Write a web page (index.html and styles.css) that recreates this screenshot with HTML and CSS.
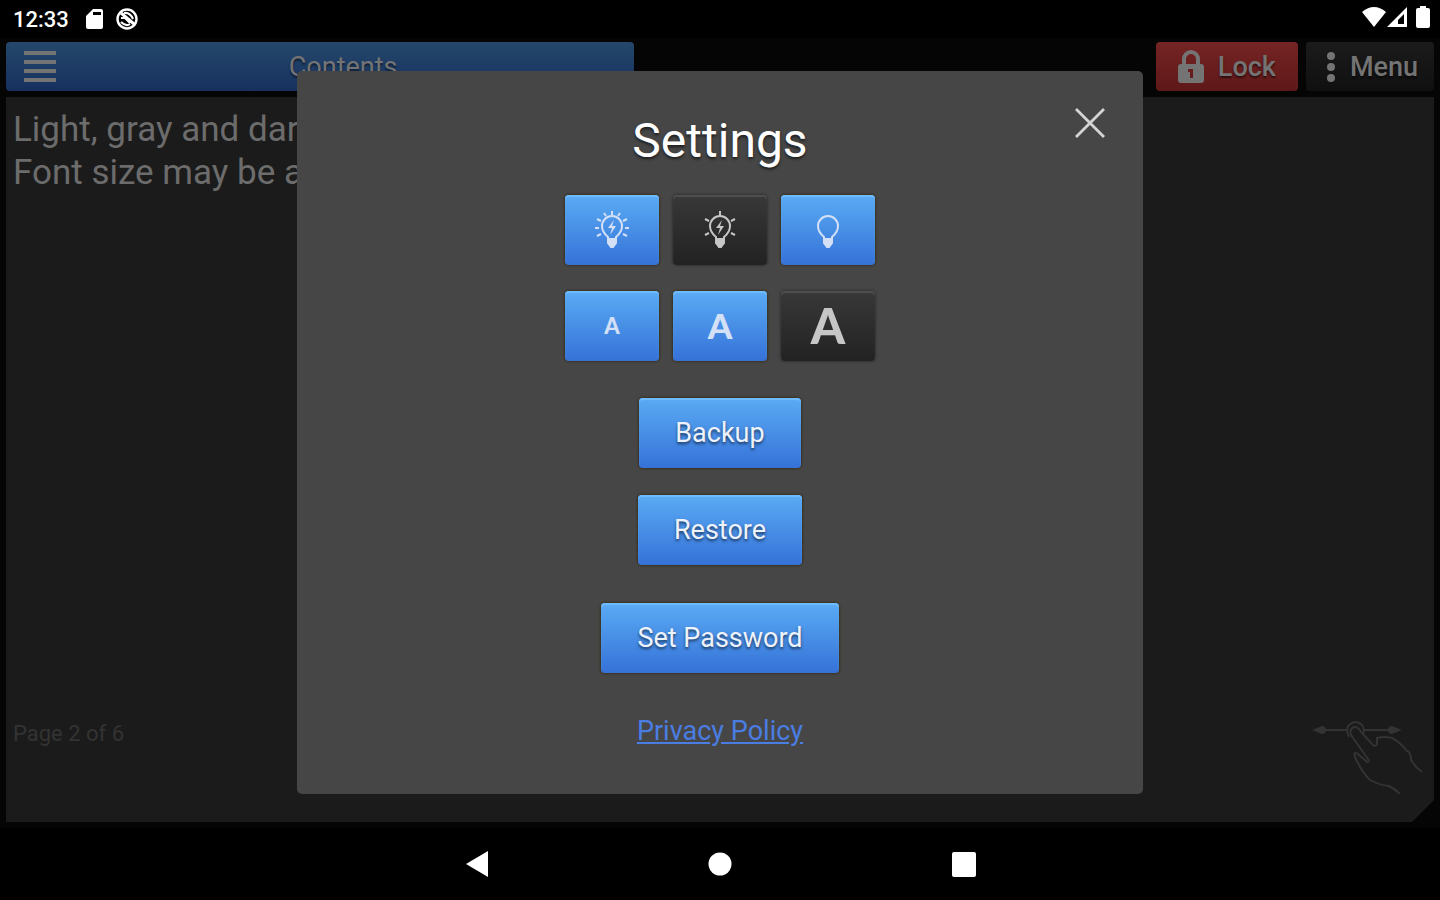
FILE: index.html
```html
<!DOCTYPE html>
<html lang="en">
<head>
<meta charset="utf-8">
<meta name="viewport" content="width=device-width, initial-scale=1">
<title>Settings</title>
<link rel="stylesheet" href="styles.css">
</head>
<body>
<div class="screen">
  <header class="status">
    <div class="status-group">
      <time class="clock">12:33</time>
      <svg width="17" height="20" viewBox="0 0 17 20"><path fill="#fff" fill-rule="evenodd" d="M7 0h8q2 0 2 2v16q0 2-2 2H2q-2 0-2-2V7zM7 3v3h8V3z"/></svg>
      <svg width="22" height="22" viewBox="0 0 22 22" fill="none" stroke="#fff"><circle cx="11" cy="11" r="9.5" stroke-width="2.4"/><path stroke-width="3" d="M5 5l13 11"/><path stroke-width="2" d="M5 14q5 5 9 2M8 5q6-1 9 6M5 10h4l5 5"/></svg>
    </div>
    <div class="status-group status-right">
      <svg width="24" height="20" viewBox="0 0 24 20"><path fill="#fff" d="M12 20L0 5Q12-5 24 5z"/></svg>
      <svg width="20" height="20" viewBox="0 0 20 20"><path fill="#fff" fill-rule="evenodd" d="M20 0v20H0zM17 7l-6 6v4h6z"/></svg>
      <svg class="battery" width="14" height="22" viewBox="0 0 14 22"><path fill="#fff" d="M4 0h6v2h2q2 0 2 2v16q0 2-2 2H2q-2 0-2-2V4q0-2 2-2h2z"/></svg>
    </div>
  </header>

  <main class="app">
    <div class="toolbar">
      <button class="bar-btn contents" type="button">
        <svg width="32" height="34" viewBox="0 0 32 34" stroke="currentColor" stroke-width="4"><path d="M0 3h32M0 12h32M0 21h32M0 30h32"/></svg>
        <span class="contents-label">Contents</span>
      </button>
      <button class="bar-btn lock" type="button">
        <svg width="26" height="34" viewBox="0 0 26 34"><path fill="none" stroke="currentColor" stroke-width="4" d="M6 16V9a7 7 0 0 1 14 0v7"/><path fill="currentColor" fill-rule="evenodd" d="M3 14h20q3 0 3 3v13q0 3-3 3H3q-3 0-3-3V17q0-3 3-3zM10 19v3h2v6h3v-9z"/></svg>
        <span>Lock</span>
      </button>
      <button class="bar-btn menu" type="button">
        <svg width="10" height="32" viewBox="0 0 10 32" fill="currentColor"><circle cx="5" cy="5" r="4"/><circle cx="5" cy="16" r="4"/><circle cx="5" cy="27" r="4"/></svg>
        <span>Menu</span>
      </button>
    </div>
    <article class="page">
      <p class="page-text">Light, gray and dark themes.<br>Font size may be adjusted.</p>
      <footer class="page-foot">
        <span class="page-num">Page 2 of 6</span>
        <svg width="112" height="74" viewBox="0 0 112 74" fill="none" stroke="currentColor" stroke-width="2"><path d="M12 10h23M51 10h34"/><path fill="currentColor" stroke="none" d="M0 10l10-4q4 0 4 4t-4 4zM90 10l-10-4q-4 0-4 4t4 4z"/><path d="M37 17q-4-8 0-12 7-6 13 0 3 4 1 9M39 15q-2-6 3-8 5 0 7 5l12 13q3 2 4-1v-6q8-2 15 0 8 4 15 13 4 1 4 9 4 7 11 12M39 15l17 24q2 3-1 3l-9-8q-5-3-3 3 6 14 15 23 9 5 19 6 6 3 11 8"/></svg>
      </footer>
    </article>
  </main>

  <nav class="system-nav">
    <button type="button" aria-label="Back"><svg width="22" height="28" viewBox="0 0 22 28"><path fill="#fff" d="M22 1v26L0 14z"/></svg></button>
    <button type="button" aria-label="Home"><svg width="24" height="24" viewBox="0 0 24 24"><circle cx="12" cy="12" r="11.5" fill="#fff"/></svg></button>
    <button type="button" aria-label="Recent apps"><svg width="24" height="26" viewBox="0 0 24 26"><rect y="1" width="24" height="25" rx="2" fill="#fff"/></svg></button>
  </nav>

  <div class="overlay">
    <section class="dialog" role="dialog" aria-labelledby="dialog-title">
      <button class="close" type="button" aria-label="Close"><svg width="30" height="30" viewBox="0 0 30 30" stroke="#d4d4d4" stroke-width="2.8"><path d="M1 1l28 28M29 1L1 29"/></svg></button>
      <h1 class="title" id="dialog-title">Settings</h1>
      <div class="options">
        <button class="btn" type="button" aria-label="Light theme">
          <svg width="36" height="38" viewBox="0 0 36 38" fill="none" stroke="currentColor" stroke-width="2"><path d="M14 29v-3q-6-5-6-11a10 10 0 0 1 20 0q0 6-6 11v3z"/><path fill="currentColor" d="M14 28h8v4l-3 4h-2l-3-4z"/><path d="M18 0v4M10 2l2 3M26 2l-2 3M3 8l4 2M33 8l-4 2M1 17h4M31 17h4M3 25l4-2M33 25l-4-2"/><path fill="currentColor" stroke="none" d="M20 9l-6 8h4l-2 7 6-9h-4z"/></svg>
        </button>
        <button class="btn selected" type="button" aria-label="Gray theme">
          <svg width="36" height="38" viewBox="0 0 36 38" fill="none" stroke="currentColor" stroke-width="2"><path d="M14 29v-3q-6-5-6-11a10 10 0 0 1 20 0q0 6-6 11v3z"/><path fill="currentColor" d="M14 28h8v4l-3 4h-2l-3-4z"/><path d="M18 0v5M3 8l4 2M33 8l-4 2M3 24l4-2M33 24l-4-2"/><path fill="currentColor" stroke="none" d="M20 9l-6 8h4l-2 7 6-9h-4z"/></svg>
        </button>
        <button class="btn" type="button" aria-label="Dark theme">
          <svg width="36" height="38" viewBox="0 0 36 38" fill="none" stroke="currentColor" stroke-width="2"><path d="M14 29v-3q-6-5-6-11a10 10 0 0 1 20 0q0 6-6 11v3z"/><path fill="currentColor" d="M14 28h8v4l-3 4h-2l-3-4z"/></svg>
        </button>
        <button class="btn letter small" type="button">A</button>
        <button class="btn letter medium" type="button">A</button>
        <button class="btn letter large selected" type="button">A</button>
      </div>
      <div class="actions">
        <button class="btn action" type="button">Backup</button>
        <button class="btn action" type="button">Restore</button>
      </div>
      <button class="btn action" type="button">Set Password</button>
      <a class="privacy" href="#privacy">Privacy Policy</a>
    </section>
  </div>
</div>
</body>
</html>
```

FILE: styles.css
```css
* { box-sizing: border-box; }

body {
  margin: 0;
  background: #000;
  font-family: Roboto, "Liberation Sans", sans-serif;
}

button {
  border: 0;
  padding: 0;
  background: none;
  color: inherit;
  font: inherit;
  cursor: pointer;
}

svg { display: block; flex: none; }

.screen {
  position: relative;
  display: flex;
  flex-direction: column;
  min-height: 100vh;
}

/* System status bar */
.status {
  display: flex;
  justify-content: space-between;
  height: 38px;
  padding: 0 10px 0 13px;
  color: #fff;
}

.status-group { display: flex; align-items: center; gap: 13px; }
.status-right { gap: 1px; padding-bottom: 4px; }
.battery { margin-left: 8px; }
.clock { font-size: 22px; font-weight: 500; margin-right: 4px; }

/* Dimmed application */
.app {
  flex: 1;
  display: flex;
  flex-direction: column;
  gap: 6px;
  padding: 4px 6px 6px;
  background: #050505;
}

.toolbar { display: flex; gap: 8px; }

.bar-btn {
  display: flex;
  align-items: center;
  height: 49px;
  border-radius: 4px;
  color: #747474;
  font-size: 27px;
  font-weight: 500;
  text-shadow: 0 2px 2px #0008;
}

.contents {
  width: 44%;
  margin-right: auto;
  padding-left: 18px;
  background: linear-gradient(#25486b, #16305f);
}

.contents-label { flex: 1; padding-right: 4px; text-align: center; font-weight: 400; }
.lock { gap: 14px; padding: 0 22px; background: linear-gradient(#762424, #5e1818); }
.menu { gap: 14px; padding: 0 16px 0 20px; background: linear-gradient(#1b1b1b, #101010); }

.page {
  flex: 1;
  display: flex;
  flex-direction: column;
  justify-content: space-between;
  padding: 11px 10px 28px 7px;
  background: #1b1b1b;
  clip-path: polygon(0 0, 100% 0, 100% calc(100% - 22px), calc(100% - 22px) 100%, 0 100%);
}

.page-text { margin: 0; color: #6c6c6c; font-size: 35px; line-height: 43px; }
.page-foot { display: flex; justify-content: space-between; color: #333; }
.page-num { font-size: 22px; line-height: 28px; }

/* System navigation */
.system-nav {
  display: flex;
  align-items: center;
  justify-content: center;
  gap: 220px;
  height: 72px;
  padding-left: 2px;
}

/* Settings dialog */
.overlay {
  position: absolute;
  inset: 0;
  display: flex;
  align-items: flex-start;
  justify-content: center;
  padding-top: 71px;
}

.dialog {
  position: relative;
  display: flex;
  flex-direction: column;
  align-items: center;
  width: 58.8%;
  padding: 40px 24px 47px;
  border-radius: 5px;
  background: #464646;
}

.close { position: absolute; top: 37px; right: 38px; }

.title {
  margin: 0 0 24px;
  color: #fff;
  font-size: 48px;
  font-weight: 400;
  line-height: 60px;
  text-shadow: 0 2px 3px #0009;
}

.options {
  display: grid;
  grid-template-columns: repeat(3, 94px);
  gap: 26px 14px;
  margin-bottom: 37px;
}

.btn {
  display: flex;
  align-items: center;
  justify-content: center;
  height: 70px;
  border-radius: 4px;
  background: linear-gradient(#5aabf4, #3572d8);
  box-shadow: 0 0 2px 1px #3b321c, inset 0 2px 1px #6fbcff;
  color: #d3e0f5;
}

.selected {
  background: linear-gradient(#383838, #222);
  box-shadow: 0 0 2px 1px #333, inset 0 2px 1px #505050;
  color: #c6c6c6;
}

.letter { padding-bottom: 2px; font-family: Lato, sans-serif; font-weight: 900; }
.small { font-size: 22px; }
.medium { font-size: 35px; }
.large { font-size: 49px; }

.actions {
  display: flex;
  flex-direction: column;
  align-items: center;
  gap: 27px;
  margin-bottom: 38px;
}

.action {
  padding: 0 36px;
  color: #eef2fb;
  font-size: 27px;
  text-shadow: 0 2px 3px #0009;
}

.privacy { margin-top: 42px; color: #4a7de2; font-size: 27px; line-height: 32px; }
```
